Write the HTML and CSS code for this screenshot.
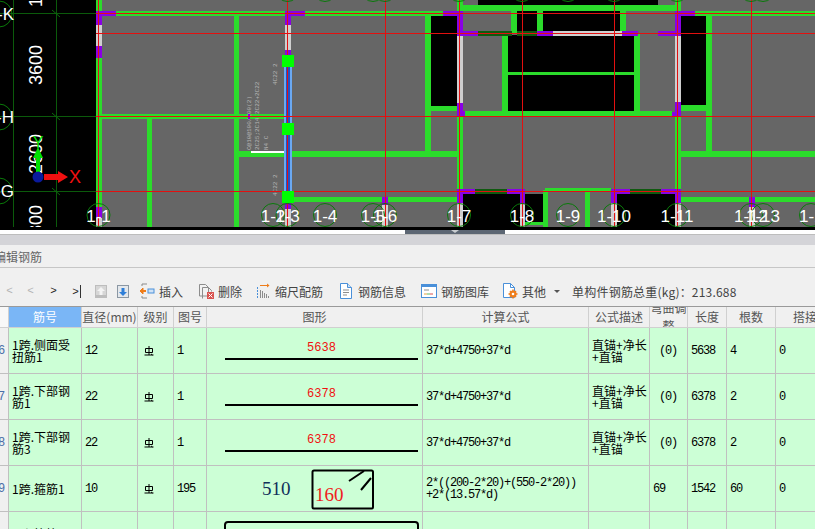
FILE: index.html
```html
<!DOCTYPE html>
<html>
<head>
  <title>编辑钢筋</title>
  <link rel="stylesheet" href="styles.css">
</head>
<body>
  <!-- CAD view: free canvas, so everything sits at drawing coordinates -->
  <svg class="cad" width="815" height="230" viewBox="0 0 815 230">
    <rect class="slab" x="96" y="0" width="719" height="227"/>

    <!-- openings -->
    <g class="void">
      <rect x="478" y="0" width="180" height="6"/>
      <rect x="431" y="16" width="27" height="91"/>
      <rect x="517" y="10" width="21" height="22"/>
      <rect x="543" y="10" width="78" height="22"/>
      <rect x="508" y="35" width="127" height="77"/>
      <rect x="680" y="16" width="27" height="90"/>
      <rect x="463" y="193" width="62" height="34"/>
      <rect x="525" y="194" width="19" height="28"/>
      <rect x="617" y="193" width="58" height="34"/>
    </g>

    <!-- axis grid -->
    <g class="grid">
      <rect x="13" y="0" width="1" height="227"/>
      <rect x="56" y="0" width="1" height="227"/>
      <rect x="0" y="13" width="96" height="1"/>
      <rect x="0" y="116" width="96" height="1"/>
      <rect x="0" y="191" width="96" height="1"/>
      <path class="tick" d="M52 10l8 7M52 113l8 7M52 188l8 7"/>
    </g>

    <!-- beams -->
    <g class="beam">
      <rect x="96" y="0" width="6" height="227"/>
      <rect x="96" y="11" width="348" height="5"/>
      <rect x="234" y="16" width="5" height="211"/>
      <rect x="147" y="119" width="5" height="108"/>
      <rect x="96" y="114" width="190" height="5"/>
      <rect x="234" y="151" width="224" height="6"/>
      <rect x="290" y="197" width="168" height="5"/>
      <rect x="425" y="16" width="6" height="137"/>
      <rect x="431" y="106" width="27" height="5"/>
      <rect x="457" y="0" width="6" height="227"/>
      <rect x="463" y="5" width="212" height="6"/>
      <rect x="511" y="11" width="6" height="22"/>
      <rect x="537" y="11" width="6" height="22"/>
      <rect x="620" y="11" width="6" height="22"/>
      <rect x="502" y="33" width="6" height="80"/>
      <rect x="634" y="33" width="6" height="80"/>
      <rect x="508" y="72" width="126" height="3"/>
      <rect x="463" y="111" width="209" height="5"/>
      <rect x="675" y="116" width="6" height="75"/>
      <rect x="675" y="0" width="6" height="12"/>
      <rect x="695" y="11" width="120" height="5"/>
      <rect x="706" y="16" width="6" height="137"/>
      <rect x="680" y="105" width="26" height="6"/>
      <rect x="680" y="151" width="135" height="6"/>
      <rect x="680" y="197" width="135" height="5"/>
      <rect x="545" y="188" width="66" height="3"/>
      <rect x="585" y="191" width="5" height="36"/>
      <rect x="525" y="222" width="20" height="3"/>
      <rect x="543" y="190" width="5" height="37"/>
    </g>

    <!-- dark link beams -->
    <g class="link">
      <rect x="478" y="31" width="34" height="5"/>
      <rect x="517" y="31" width="20" height="5"/>
      <rect x="475" y="189" width="32" height="5"/>
      <rect x="630" y="189" width="31" height="5"/>
    </g>

    <!-- shear wall bars -->
    <g class="bar">
      <rect x="96" y="25" width="6" height="21"/>
      <rect x="96" y="218" width="6" height="9"/>
      <rect x="285" y="25" width="6" height="25"/>
      <rect x="285" y="209" width="6" height="18"/>
      <rect x="382" y="205" width="6" height="22"/>
      <rect x="457" y="36" width="6" height="67"/>
      <rect x="457" y="203" width="6" height="24"/>
      <rect x="520" y="204" width="5" height="23"/>
      <rect x="553" y="31" width="69" height="5"/>
      <rect x="611" y="203" width="6" height="24"/>
      <rect x="675" y="36" width="6" height="66"/>
      <rect x="675" y="203" width="6" height="24"/>
      <rect x="749" y="207" width="6" height="20"/>
    </g>

    <!-- columns -->
    <g class="column">
      <path d="M96 11h20v5h-14v9h-6zM96 46h6v12h-6zM96 207h6v11h-6z"/>
      <path d="M285 11h20v5h-14v9h-6zM285 50h6v5h-6zM285 203h6v6h-6z"/>
      <path d="M382 197h6v8h-6z"/>
      <path d="M443 11h20v25h-6v-20h-14z"/>
      <path d="M457 31h21v5h-21zM457 103h6v8h2v5h-8z"/>
      <path d="M537 31h16v5h-16z"/>
      <path d="M622 31h16v5h-16zM658 31h17v5h-17z"/>
      <path d="M675 11h20v5h-14v20h-6z"/>
      <path d="M675 102h6v14h-9v-4h3z"/>
      <path d="M457 189h18v5h-12v9h-6z"/>
      <path d="M507 189h18v15h-5v-10h-13z"/>
      <path d="M611 189h19v5h-13v9h-6z"/>
      <path d="M661 189h20v14h-6v-9h-14z"/>
      <path d="M749 197h6v10h-6z"/>
    </g>

    <!-- annotation on the selected beam -->
    <g class="note">
      <text transform="rotate(-90 251 150)" x="251" y="150">C@10@100/200(2)</text>
      <text transform="rotate(-90 259 150)" x="259" y="150">2C25;2C14 2C22+2C22</text>
      <text transform="rotate(-90 268 150)" x="268" y="150">N4 C</text>
      <text transform="rotate(-90 277 85)" x="277" y="85">4C22 2</text>
      <text transform="rotate(-90 277 196)" x="277" y="196">4C22 2</text>
    </g>
    <rect class="white-bar" x="251" y="151" width="33" height="2"/>
    <rect class="column" x="248" y="114" width="2" height="5"/>

    <!-- selected beam -->
    <rect class="picked" x="284" y="60" width="8" height="137"/>
    <rect class="picked-core" x="286" y="60" width="4" height="137"/>

    <!-- red axis lines -->
    <g class="red">
      <rect x="96" y="13" width="719" height="1"/>
      <rect x="96" y="33" width="719" height="1"/>
      <rect x="96" y="116" width="719" height="1"/>
      <rect x="96" y="191" width="719" height="1"/>
      <rect x="98" y="0" width="1" height="227"/>
      <rect x="287" y="0" width="1" height="227"/>
      <rect x="385" y="0" width="1" height="227"/>
      <rect x="459" y="0" width="1" height="227"/>
      <rect x="522" y="0" width="1" height="227"/>
      <rect x="614" y="0" width="1" height="227"/>
      <rect x="677" y="0" width="1" height="227"/>
      <rect x="751" y="0" width="1" height="227"/>
    </g>

    <g class="grip">
      <rect x="282" y="55" width="12" height="12"/>
      <rect x="282" y="123" width="12" height="12"/>
      <rect x="282" y="191" width="12" height="12"/>
    </g>

    <!-- axis bubbles -->
    <g class="bubble">
      <circle cx="-1" cy="14" r="13"/>
      <circle cx="-1" cy="117" r="13"/>
      <circle cx="-1" cy="191" r="13"/>
      <circle cx="98.5" cy="215" r="11.5"/>
      <circle cx="273" cy="215" r="11.5"/>
      <circle cx="287.5" cy="215" r="11.5"/>
      <circle cx="325" cy="215" r="11.5"/>
      <circle cx="373" cy="215" r="11.5"/>
      <circle cx="385" cy="215" r="11.5"/>
      <circle cx="459" cy="215" r="11.5"/>
      <circle cx="522" cy="215" r="11.5"/>
      <circle cx="568" cy="215" r="11.5"/>
      <circle cx="614" cy="215" r="11.5"/>
      <circle cx="677" cy="215" r="11.5"/>
      <circle cx="751" cy="215" r="11.5"/>
      <circle cx="763" cy="215" r="11.5"/>
      <circle cx="811" cy="215" r="11.5"/>
      <circle cx="287.5" cy="-10" r="11.5"/>
      <circle cx="325" cy="-10" r="11.5"/>
      <circle cx="373" cy="-10" r="11.5"/>
      <circle cx="385" cy="-10" r="11.5"/>
      <circle cx="459" cy="-10" r="11.5"/>
      <circle cx="522" cy="-10" r="11.5"/>
      <circle cx="568" cy="-10" r="11.5"/>
      <circle cx="614" cy="-10" r="11.5"/>
      <circle cx="677" cy="-10" r="11.5"/>
      <circle cx="751" cy="-10" r="11.5"/>
      <circle cx="763" cy="-10" r="11.5"/>
    </g>

    <g class="axis-label">
      <text class="end" x="14" y="20">1-K</text>
      <text class="end" x="14" y="123">1-H</text>
      <text class="end" x="14" y="197">1-G</text>
      <text x="98.5" y="222">1-1</text>
      <text x="273" y="222">1-2</text>
      <text x="287.5" y="222">1-3</text>
      <text x="325" y="222">1-4</text>
      <text x="373" y="222">1-5</text>
      <text x="385" y="222">1-6</text>
      <text x="459" y="222">1-7</text>
      <text x="522" y="222">1-8</text>
      <text x="568" y="222">1-9</text>
      <text x="614" y="222">1-10</text>
      <text x="677" y="222">1-11</text>
      <text x="751" y="222">1-12</text>
      <text x="763" y="222">1-13</text>
      <text x="816" y="222">1-14</text>
    </g>

    <g class="span-label">
      <text transform="rotate(-90 42 7)" x="42" y="7">1800</text>
      <text transform="rotate(-90 42 85)" x="42" y="85">3600</text>
      <text transform="rotate(-90 42 174)" x="42" y="174">2600</text>
      <text transform="rotate(-90 42 245)" x="42" y="245">1800</text>
    </g>
    <rect class="strip" x="0" y="227" width="815" height="3"/>

    <!-- UCS marker -->
    <path class="ucs-y" d="M36 172v-14h-3l5-11 5 11h-3v14z"/>
    <path class="ucs-x" d="M44 174h14v-3l10 6-10 6v-3h-14z"/>
    <circle class="ucs-o" cx="38" cy="177" r="5.5"/>
    <text class="ucs-text-x" x="69" y="183">X</text>
    <text class="ucs-text-y" x="38" y="148">Y</text>
  </svg>

  <div class="splitter"><div class="handle"></div></div>
  <div class="band"></div>
  <div class="title">编辑钢筋</div>

  <div class="toolbar">
    <div class="nav">
      <span class="nav-btn off first">&lt;</span>
      <span class="nav-btn off">&lt;</span>
      <span class="nav-btn">&gt;</span>
      <span class="nav-btn last">&gt;</span>
    </div>
    <svg class="ico-move" viewBox="0 0 12 13"><rect width="12" height="13" fill="#bdbdbd"/><rect x="1" y="1" width="10" height="9" fill="#d6d6d6"/><path d="M6 2l4 4H7.500v4h-3V6H2z" fill="#f4f4f4"/></svg>
    <svg class="ico-move" viewBox="0 0 12 13"><rect width="12" height="13" fill="#8b97a3"/><rect x="1" y="1" width="10" height="11" fill="#e4e8ec"/><path d="M4.500 3h3v4H10l-4 4-4-4h2.500z" fill="#2f7fd8"/></svg>

    <div class="tool">
      <svg class="ico" viewBox="0 0 16 16"><path d="M3 1h5M3 1v2M3 13v2h5" stroke="#8a8a8a" fill="none"/><path d="M4 5L1 8l3 3z" fill="#ef7d1a" stroke="#ef7d1a"/><path d="M4 8h3" stroke="#ef7d1a" stroke-width="2"/><rect x="9" y="6" width="6" height="4" fill="#cfe2f6" stroke="#4a90d9"/></svg>
      <span>插入</span>
    </div>
    <div class="tool">
      <svg class="ico" viewBox="0 0 16 16"><path d="M1.500 13V1.500h6l3 3V13z" fill="#f2f2f2" stroke="#8d8d8d"/><path d="M4.500 15.500V4.500h6l3 3v1" fill="none" stroke="#8d8d8d"/><rect x="9" y="9" width="7" height="7" fill="#d9534f"/><path d="M10.500 10.500l4 4M14.500 10.500l-4 4" stroke="#fff"/></svg>
      <span>删除</span>
    </div>
    <div class="tool">
      <svg class="ico slim" viewBox="0 0 14 16"><path d="M3 2.500h9" stroke="#ef7d1a"/><path d="M10 .5l2.500 2-2.500 2z" fill="#ef7d1a"/><path d="M.5 4v12" stroke="#4a90d9" stroke-dasharray="2 1"/><path d="M3.500 7v8M5.500 8v7M7.500 10v5M9.500 11v4M11.500 13v2" stroke="#8d8d8d"/></svg>
      <span>缩尺配筋</span>
    </div>
    <div class="tool">
      <svg class="ico" viewBox="0 0 16 16"><path d="M2.500.5h7l4 4v11h-11z" fill="#fff" stroke="#4a90d9"/><path d="M9.500.5v4h4" fill="#cfe2f6" stroke="#4a90d9"/><path d="M5 7h6M5 9.500h6M5 12h4" stroke="#8d8d8d"/></svg>
      <span>钢筋信息</span>
    </div>
    <div class="tool">
      <svg class="ico" viewBox="0 0 16 16"><rect x=".5" y="1.500" width="15" height="13" fill="#fff" stroke="#4a90d9"/><rect x="1" y="2" width="14" height="2" fill="#4a90d9"/><path d="M3 7h5" stroke="#8d8d8d"/><path d="M3 11h3" stroke="#e8a33d"/><path d="M6 11h3" stroke="#5cb85c"/><path d="M9 11h3" stroke="#d9534f"/></svg>
      <span>钢筋图库</span>
    </div>
    <div class="tool other">
      <svg class="ico" viewBox="0 0 16 16"><path d="M1.500.5h7l4 4v10h-11z" fill="#fff" stroke="#4a90d9"/><path d="M8.500.5v4h4" fill="none" stroke="#4a90d9"/><path d="M11 6.500v9M6.500 11h9M8 8l6 6M14 8l-6 6" stroke="#ef7d1a" stroke-width="1.500"/><circle cx="11" cy="11" r="3.500" fill="#ef7d1a"/><circle cx="11" cy="11" r="1.300" fill="#fff"/></svg>
      <span>其他</span>
      <i class="caret"></i>
    </div>
    <span class="total">单构件钢筋总重(kg)：213.688</span>
  </div>

  <div class="sheet">
    <table class="rebar">
      <colgroup>
        <col class="c-no"><col class="c-name"><col class="c-dia"><col class="c-grade"><col class="c-fig">
        <col class="c-shape"><col class="c-calc"><col class="c-desc"><col class="c-bend"><col class="c-len">
        <col class="c-num"><col class="c-lap">
      </colgroup>
      <thead>
        <tr>
          <th class="corner"></th>
          <th class="active"><div class="hd">筋号</div></th>
          <th><div class="hd">直径(mm)</div></th>
          <th><div class="hd">级别</div></th>
          <th><div class="hd">图号</div></th>
          <th><div class="hd">图形</div></th>
          <th><div class="hd">计算公式</div></th>
          <th><div class="hd">公式描述</div></th>
          <th><div class="hd">弯曲调整</div></th>
          <th><div class="hd">长度</div></th>
          <th><div class="hd">根数</div></th>
          <th><div class="hd">搭接</div></th>
        </tr>
      </thead>
      <tbody>
        <tr>
          <td class="no">6</td>
          <td class="cn-cell">1跨.侧面受扭筋1</td>
          <td>12</td>
          <td><svg class="grade" viewBox="0 0 10 10"><use href="#grade3"/></svg></td>
          <td>1</td>
          <td class="shape"><div class="line-shape">5638</div></td>
          <td>37*d+4750+37*d</td>
          <td class="cn-cell">直锚+净长+直锚</td>
          <td>&nbsp;(0)</td>
          <td>5638</td>
          <td>4</td>
          <td>0</td>
        </tr>
        <tr>
          <td class="no">7</td>
          <td class="cn-cell">1跨.下部钢筋1</td>
          <td>22</td>
          <td><svg class="grade" viewBox="0 0 10 10"><use href="#grade3"/></svg></td>
          <td>1</td>
          <td class="shape"><div class="line-shape">6378</div></td>
          <td>37*d+4750+37*d</td>
          <td class="cn-cell">直锚+净长+直锚</td>
          <td>&nbsp;(0)</td>
          <td>6378</td>
          <td>2</td>
          <td>0</td>
        </tr>
        <tr>
          <td class="no">8</td>
          <td class="cn-cell">1跨.下部钢筋3</td>
          <td>22</td>
          <td><svg class="grade" viewBox="0 0 10 10"><use href="#grade3"/></svg></td>
          <td>1</td>
          <td class="shape"><div class="line-shape">6378</div></td>
          <td>37*d+4750+37*d</td>
          <td class="cn-cell">直锚+净长+直锚</td>
          <td>&nbsp;(0)</td>
          <td>6378</td>
          <td>2</td>
          <td>0</td>
        </tr>
        <tr>
          <td class="no">9</td>
          <td class="cn-cell">1跨.箍筋1</td>
          <td>10</td>
          <td><svg class="grade" viewBox="0 0 10 10"><use href="#grade3"/></svg></td>
          <td>195</td>
          <td class="shape">
            <svg class="hoop" width="215" height="45" viewBox="0 0 215 45">
              <text class="hoop-w" x="55" y="29">510</text>
              <rect x="105.500" y="4.500" width="60.500" height="38" rx="1.500"/>
              <path d="M142 15l15-10M154 24l10-12"/>
              <text class="hoop-h" x="108" y="35">160</text>
            </svg>
          </td>
          <td class="formula">2*((200-2*20)+(550-2*20))<br>+2*(13.57*d)</td>
          <td></td>
          <td>69</td>
          <td>1542</td>
          <td>60</td>
          <td>0</td>
        </tr>
        <tr>
          <td class="no"></td>
          <td class="cn-cell last-name">1跨.箍筋2</td>
          <td></td><td></td><td></td>
          <td class="shape"><div class="box-shape"></div></td>
          <td></td><td></td><td></td><td></td><td></td><td></td>
        </tr>
      </tbody>
    </table>
  </div>

  <svg class="defs" width="0" height="0">
    <symbol id="grade3" viewBox="0 0 10 10">
      <path d="M1.500 2.500h7v4h-7zM5 0v9M0.500 9h9M7 8l1.500 1" fill="none" stroke="#000"/>
    </symbol>
  </svg>
</body>
</html>
```

FILE: styles.css
```css
body {
  margin: 0;
  width: 815px;
  height: 529px;
  overflow: hidden;
  background: #f0f0f0;
  color: #444;
  font-family: 'Noto Sans CJK SC', sans-serif;
  font-size: 12px;
}

/* CAD view */
.cad {
  display: block;
  background: #000;
}

.slab { fill: #666; }
.void { fill: #000; }
.grid rect { fill: #0b5a0b; }
.tick { stroke: #0b6a0b; fill: none; }
.beam { fill: #2bdc2b; }
.link { fill: #0f5a0f; }
.bar { fill: #cfcfcf; }
.column { fill: #8a00e6; }
.red { fill: #e31010; }
.grip { fill: #00ff00; }
.white-bar { fill: #fff; }
.picked { fill: #6aa8f2; }
.picked-core { fill: #2050c8; }
.strip { fill: #000; }

.bubble {
  fill: none;
  stroke: #0a7a0a;
}

.axis-label text {
  fill: #fff;
  font-family: 'Liberation Sans', sans-serif;
  font-size: 17px;
  text-anchor: middle;
}

.axis-label .end { text-anchor: end; }

.span-label text {
  fill: #fff;
  font-family: 'Liberation Sans', sans-serif;
  font-size: 18px;
}

.note text {
  fill: #b5b5b5;
  font-family: 'Liberation Mono', monospace;
  font-size: 6px;
}

.ucs-y { fill: #00e000; }
.ucs-x { fill: #f01010; }
.ucs-o { fill: #0a1a9c; }

.ucs-text-x {
  fill: #f01010;
  font-family: 'Liberation Sans', sans-serif;
  font-size: 18px;
}

.ucs-text-y {
  fill: #00e000;
  font-family: 'Liberation Sans', sans-serif;
  font-size: 16px;
  text-anchor: middle;
}

/* Splitter between the view and the panel */
.splitter {
  height: 4px;
  background: #fff;
}

.handle {
  position: relative;
  width: 100px;
  height: 4px;
  margin-left: 405px;
  background: #5c6673;
}

.handle::after {
  content: '';
  position: absolute;
  left: 46px;
  top: 0;
  border-left: 4px solid transparent;
  border-right: 4px solid transparent;
  border-top: 3px solid #c8ccd0;
}

.band {
  height: 10px;
  background: #d4d4d8;
  border-top: 1px solid #bdbdbd;
}

.title {
  height: 22px;
  line-height: 24px;
  margin-left: -6px;
  color: #666;
  font-size: 12px;
  border-bottom: 1px solid #c6c6c6;
  width: 821px;
}

/* Toolbar */
.toolbar {
  display: flex;
  align-items: center;
  height: 30px;
  padding-top: 8px;
  border-bottom: 1px solid #9a9a9a;
}

.nav {
  display: flex;
  width: 95px;
  margin-left: -4px;
  margin-right: 4px;
  font-family: 'Liberation Mono', monospace;
  font-size: 11px;
  color: #222;
}

.nav-btn {
  width: 23px;
  text-align: center;
}

.nav-btn.off { color: #b4b4b4; }

.nav-btn.first {
  width: 19px;
  margin-left: 2px;
  border-left: 2px solid #c6bcd8;
}

.nav-btn.last::after {
  content: '';
  display: inline-block;
  width: 1px;
  height: 13px;
  margin-left: 1px;
  background: #333;
  vertical-align: -3px;
}

.ico-move {
  width: 12px;
  height: 13px;
  margin-right: 10px;
}

.tool {
  display: flex;
  align-items: center;
  gap: 4px;
  margin-right: 15px;
  color: #444;
}

.tool:first-of-type { margin-left: 1px; }

.tool.other {
  margin-left: -2px;
  margin-right: 12px;
}

.ico {
  width: 16px;
  height: 16px;
}

.ico.slim { width: 14px; }

.caret {
  width: 0;
  height: 0;
  margin-left: 4px;
  border-left: 3px solid transparent;
  border-right: 3px solid transparent;
  border-top: 3px solid #555;
}

.total {
  white-space: nowrap;
  letter-spacing: .2px;
  color: #444;
}

/* Rebar table */
.sheet {
  width: 815px;
  height: 222px;
  overflow: hidden;
}

.rebar {
  table-layout: fixed;
  border-collapse: separate;
  border-spacing: 0;
  width: 835px;
}

.c-no { width: 9px; }
.c-name { width: 73px; }
.c-dia { width: 56px; }
.c-grade { width: 36px; }
.c-fig { width: 33px; }
.c-shape { width: 216px; }
.c-calc { width: 166px; }
.c-desc { width: 61px; }
.c-bend { width: 38px; }
.c-len { width: 39px; }
.c-num { width: 49px; }
.c-lap { width: 59px; }

.rebar th {
  height: 20px;
  padding: 0;
  background: #f0f0f0;
  color: #555;
  font-size: 12px;
  font-weight: normal;
  border-right: 1px solid #d0d0d0;
  border-bottom: 1px solid #d0d0d0;
}

.rebar th.corner { background: #f8f8f8; }

.rebar th.active {
  background: #7ab6f6;
  color: #fff;
}

.hd {
  display: flex;
  align-items: center;
  justify-content: center;
  height: 20px;
  overflow: hidden;
  line-height: 18px;
  text-align: center;
}

.rebar td {
  height: 45px;
  padding: 0 0 0 3px;
  background: #ccffd6;
  color: #000;
  font-family: 'Liberation Mono', 'Noto Sans CJK SC', monospace;
  font-size: 12px;
  letter-spacing: -1.200px;
  line-height: 12px;
  border-right: 1px solid #c0c0c0;
  border-bottom: 1px solid #c0c0c0;
}

.rebar td.no {
  padding: 0;
  text-indent: -2px;
  background: #f0f0f0;
  color: #4a6fa8;
  overflow: hidden;
}

/* CJK labels keep their full width, the Latin text next to them is squeezed */
.rebar td.cn-cell {
  font-family: 'Noto Sans CJK SC', sans-serif;
  letter-spacing: 0;
  padding-right: 2px;
}

.rebar td.last-name {
  vertical-align: top;
  padding-top: 16px;
}

.rebar td.shape {
  padding: 0;
  vertical-align: top;
}

.line-shape {
  width: 193px;
  margin: 13px 0 0 18px;
  padding-bottom: 3px;
  color: #f01010;
  letter-spacing: 0;
  line-height: 14px;
  text-align: center;
  border-bottom: 2px solid #000;
}

.grade {
  display: block;
  width: 10px;
  height: 10px;
  margin-left: 3px;
}

.hoop {
  display: block;
}

.hoop rect,
.hoop path {
  fill: none;
  stroke: #000;
  stroke-width: 2;
}

.hoop text {
  font-family: 'Liberation Serif', serif;
  font-size: 19px;
  letter-spacing: 0;
}

.hoop-w { fill: #10305a; }
.hoop-h { fill: #f02020; }

.box-shape {
  width: 191px;
  height: 30px;
  margin: 9px 0 0 17px;
  border: 2px solid #000;
  border-radius: 4px;
}

.defs { position: absolute; }
```
